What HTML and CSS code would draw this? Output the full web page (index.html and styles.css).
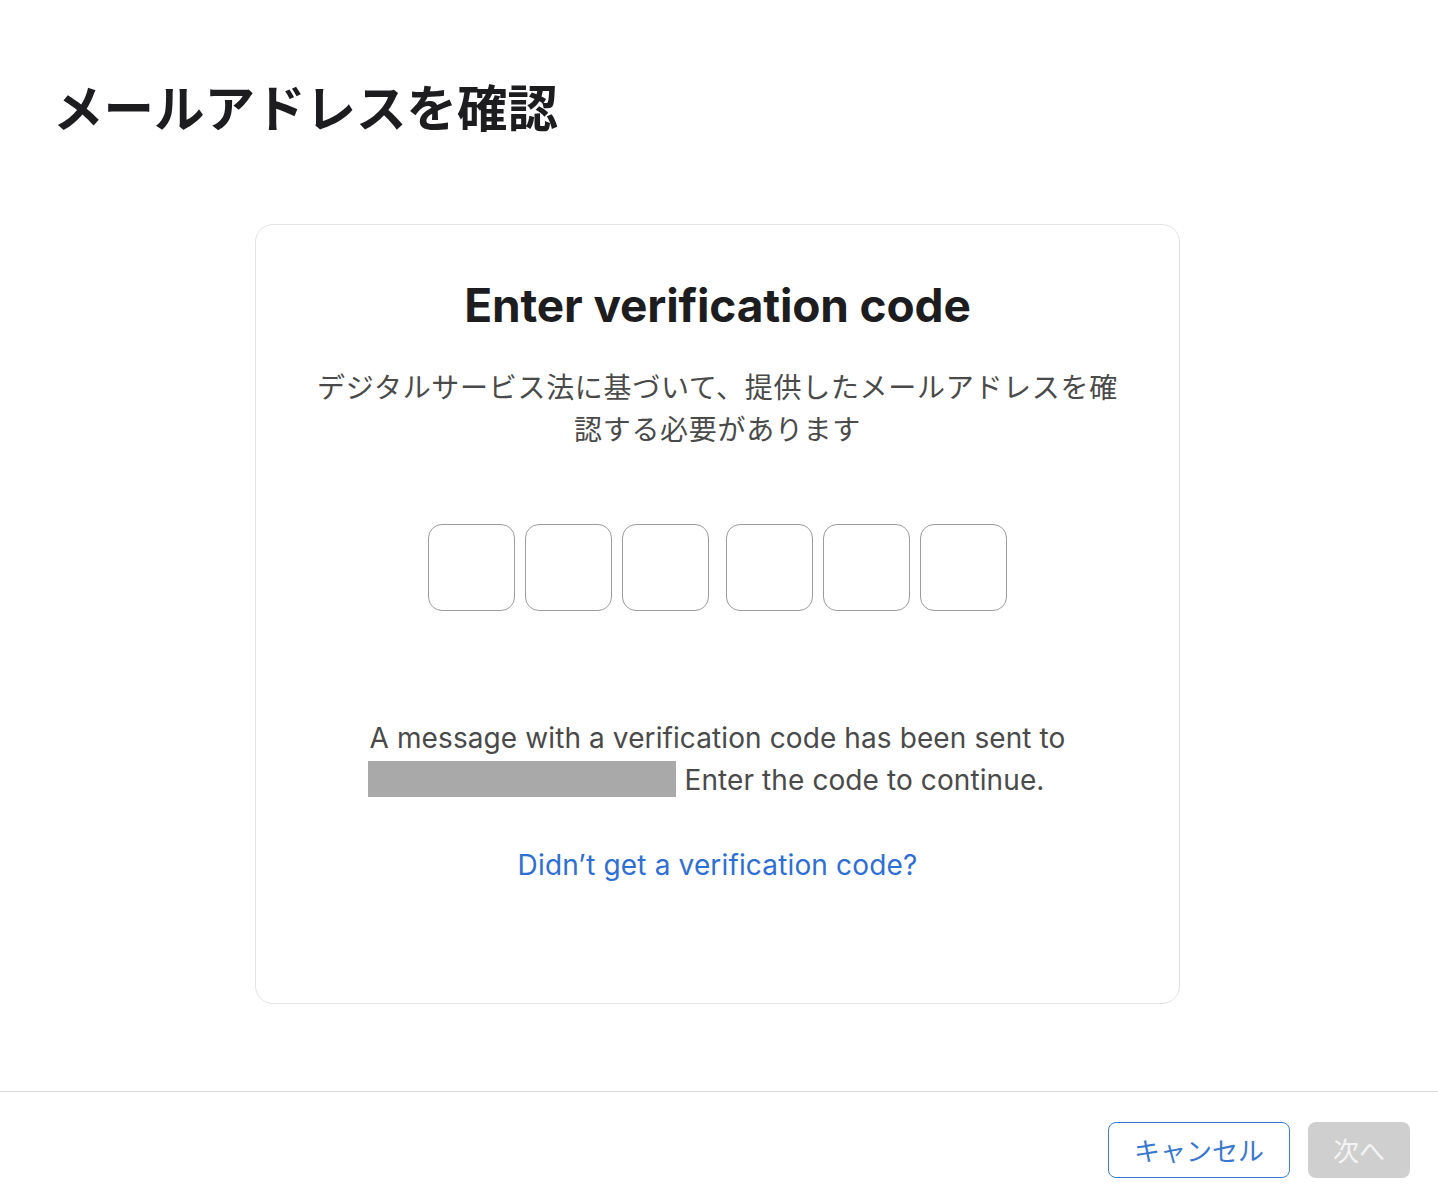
FILE: index.html
```html
<!DOCTYPE html>
<html lang="ja">
<head>
<meta charset="utf-8">
<title>メールアドレスを確認</title>
<link rel="stylesheet" href="styles.css">
</head>
<body>
<div class="page">
  <main class="main">
    <h1 class="page-title">メールアドレスを確認</h1>
    <section class="card">
      <h2 class="card-title">Enter verification code</h2>
      <p class="card-desc">デジタルサービス法に基づいて、提供したメールアドレスを確認する必要があります</p>
      <div class="otp">
        <div class="otp-group">
          <input class="otp-box" type="text" maxlength="1" aria-label="digit 1">
          <input class="otp-box" type="text" maxlength="1" aria-label="digit 2">
          <input class="otp-box" type="text" maxlength="1" aria-label="digit 3">
        </div>
        <div class="otp-group">
          <input class="otp-box" type="text" maxlength="1" aria-label="digit 4">
          <input class="otp-box" type="text" maxlength="1" aria-label="digit 5">
          <input class="otp-box" type="text" maxlength="1" aria-label="digit 6">
        </div>
      </div>
      <p class="message">A message with a verification code has been sent to <span class="redacted"></span> Enter the code to continue.</p>
      <a class="resend" href="#">Didn’t get a verification code?</a>
    </section>
  </main>
  <footer class="footer">
    <button class="btn btn-cancel" type="button">キャンセル</button>
    <button class="btn btn-next" type="button" disabled>次へ</button>
  </footer>
</div>
</body>
</html>
```

FILE: styles.css
```css
html, body {
  margin: 0;
  padding: 0;
  background: #ffffff;
}

body {
  font-family: Inter, "Noto Sans CJK JP", sans-serif;
  color: #1d1d1f;
}

.page {
  display: flex;
  flex-direction: column;
  min-height: 1197px;
}

.main {
  display: flex;
  flex-direction: column;
  padding: 75px 3px 0 0;
}

.page-title {
  margin: 0;
  padding-left: 53px;
  font-family: "Noto Sans CJK JP", sans-serif;
  font-size: 50.5px;
  line-height: 60px;
  font-weight: 700;
  color: #1d1d1f;
}

.card {
  box-sizing: border-box;
  width: 925px;
  margin: 89px auto 0;
  padding: 52px 60px 117px;
  border: 1px solid #e3e3e3;
  border-radius: 18px;
  display: flex;
  flex-direction: column;
  align-items: center;
  text-align: center;
}

.card-title {
  margin: 0;
  font-family: Inter, sans-serif;
  font-size: 46px;
  line-height: 56px;
  font-weight: 700;
  letter-spacing: -0.15px;
  color: #1d1d1f;
}

.card-desc {
  margin: 32px 0 0;
  font-family: "Noto Sans CJK JP", sans-serif;
  font-size: 28px;
  line-height: 42px;
  font-weight: 400;
  letter-spacing: 0.7px;
  color: #4a4a4a;
}

.otp {
  margin-top: 75px;
  display: flex;
  gap: 17px;
}

.otp-group {
  display: flex;
  gap: 10px;
}

.otp-box {
  box-sizing: border-box;
  width: 87px;
  height: 87px;
  margin: 0;
  padding: 0;
  border: 1.5px solid #9c9c9c;
  border-radius: 14px;
  background: #ffffff;
  outline: none;
  font-family: Inter, sans-serif;
  font-size: 36px;
  text-align: center;
}

.message {
  margin: 106px 0 0;
  font-family: Inter, "Noto Sans CJK JP", sans-serif;
  font-size: 28px;
  line-height: 42px;
  letter-spacing: 0.1px;
  color: #4a4a4a;
}

.message::after {
  content: "";
  display: inline-block;
  width: 22px;
}

.redacted {
  display: inline-block;
  width: 308px;
  height: 36px;
  background: #a9a9a9;
  vertical-align: -7px;
}

.resend {
  margin-top: 43px;
  font-family: Inter, sans-serif;
  font-size: 28px;
  line-height: 42px;
  letter-spacing: 0.15px;
  color: #2f6fd4;
  text-decoration: none;
}

.footer {
  margin-top: 87px;
  border-top: 1px solid #dcdcdc;
  padding: 30px 28px 0 0;
  display: flex;
  justify-content: flex-end;
  gap: 18px;
}

.btn {
  box-sizing: border-box;
  height: 56px;
  border-radius: 8px;
  font-family: "Noto Sans CJK JP", sans-serif;
  font-size: 26px;
  line-height: 1;
  padding: 0;
  cursor: pointer;
}

.btn-cancel {
  width: 182px;
  background: #ffffff;
  border: 1.5px solid #3a7bd6;
  color: #3a78d0;
}

.btn-next {
  width: 102px;
  background: #cfcfcf;
  border: none;
  color: #f4f4f4;
  cursor: default;
}
```
